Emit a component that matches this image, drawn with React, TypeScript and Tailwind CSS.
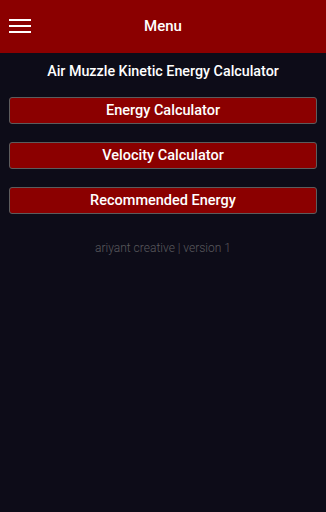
const BUTTONS = ["Energy Calculator", "Velocity Calculator", "Recommended Energy"];

export default function App() {
  return (
    <div className="min-h-[512px] bg-[#0d0c18] font-['Roboto',sans-serif] text-white">
      <header className="relative flex h-[53px] items-center justify-center bg-[#8b0000]">
        <button className="absolute left-[9px] top-[19px] flex w-[22px] flex-col gap-[4px]">
          <span className="h-[2px] w-full bg-white" />
          <span className="h-[2px] w-full bg-white" />
          <span className="h-[2px] w-full bg-white" />
        </button>
        <h1 className="text-[15px] font-medium">Menu</h1>
      </header>
      <main className="flex flex-col px-[9px]">
        <h2 className="mt-[8px] text-center text-[14.3px] font-medium leading-[20px]">
          Air Muzzle Kinetic Energy Calculator
        </h2>
        <div className="mt-[16px] flex flex-col gap-[18px]">
          {BUTTONS.map((label) => (
            <button
              key={label}
              className="h-[27px] rounded-[3px] border border-[#5c5c5c] bg-[#8b0000] text-[14.5px] font-medium"
            >
              {label}
            </button>
          ))}
        </div>
        <p className="mt-[25px] text-center text-[12px] font-light text-[#5a5a5e]">
          ariyant creative | version 1
        </p>
      </main>
    </div>
  );
}
